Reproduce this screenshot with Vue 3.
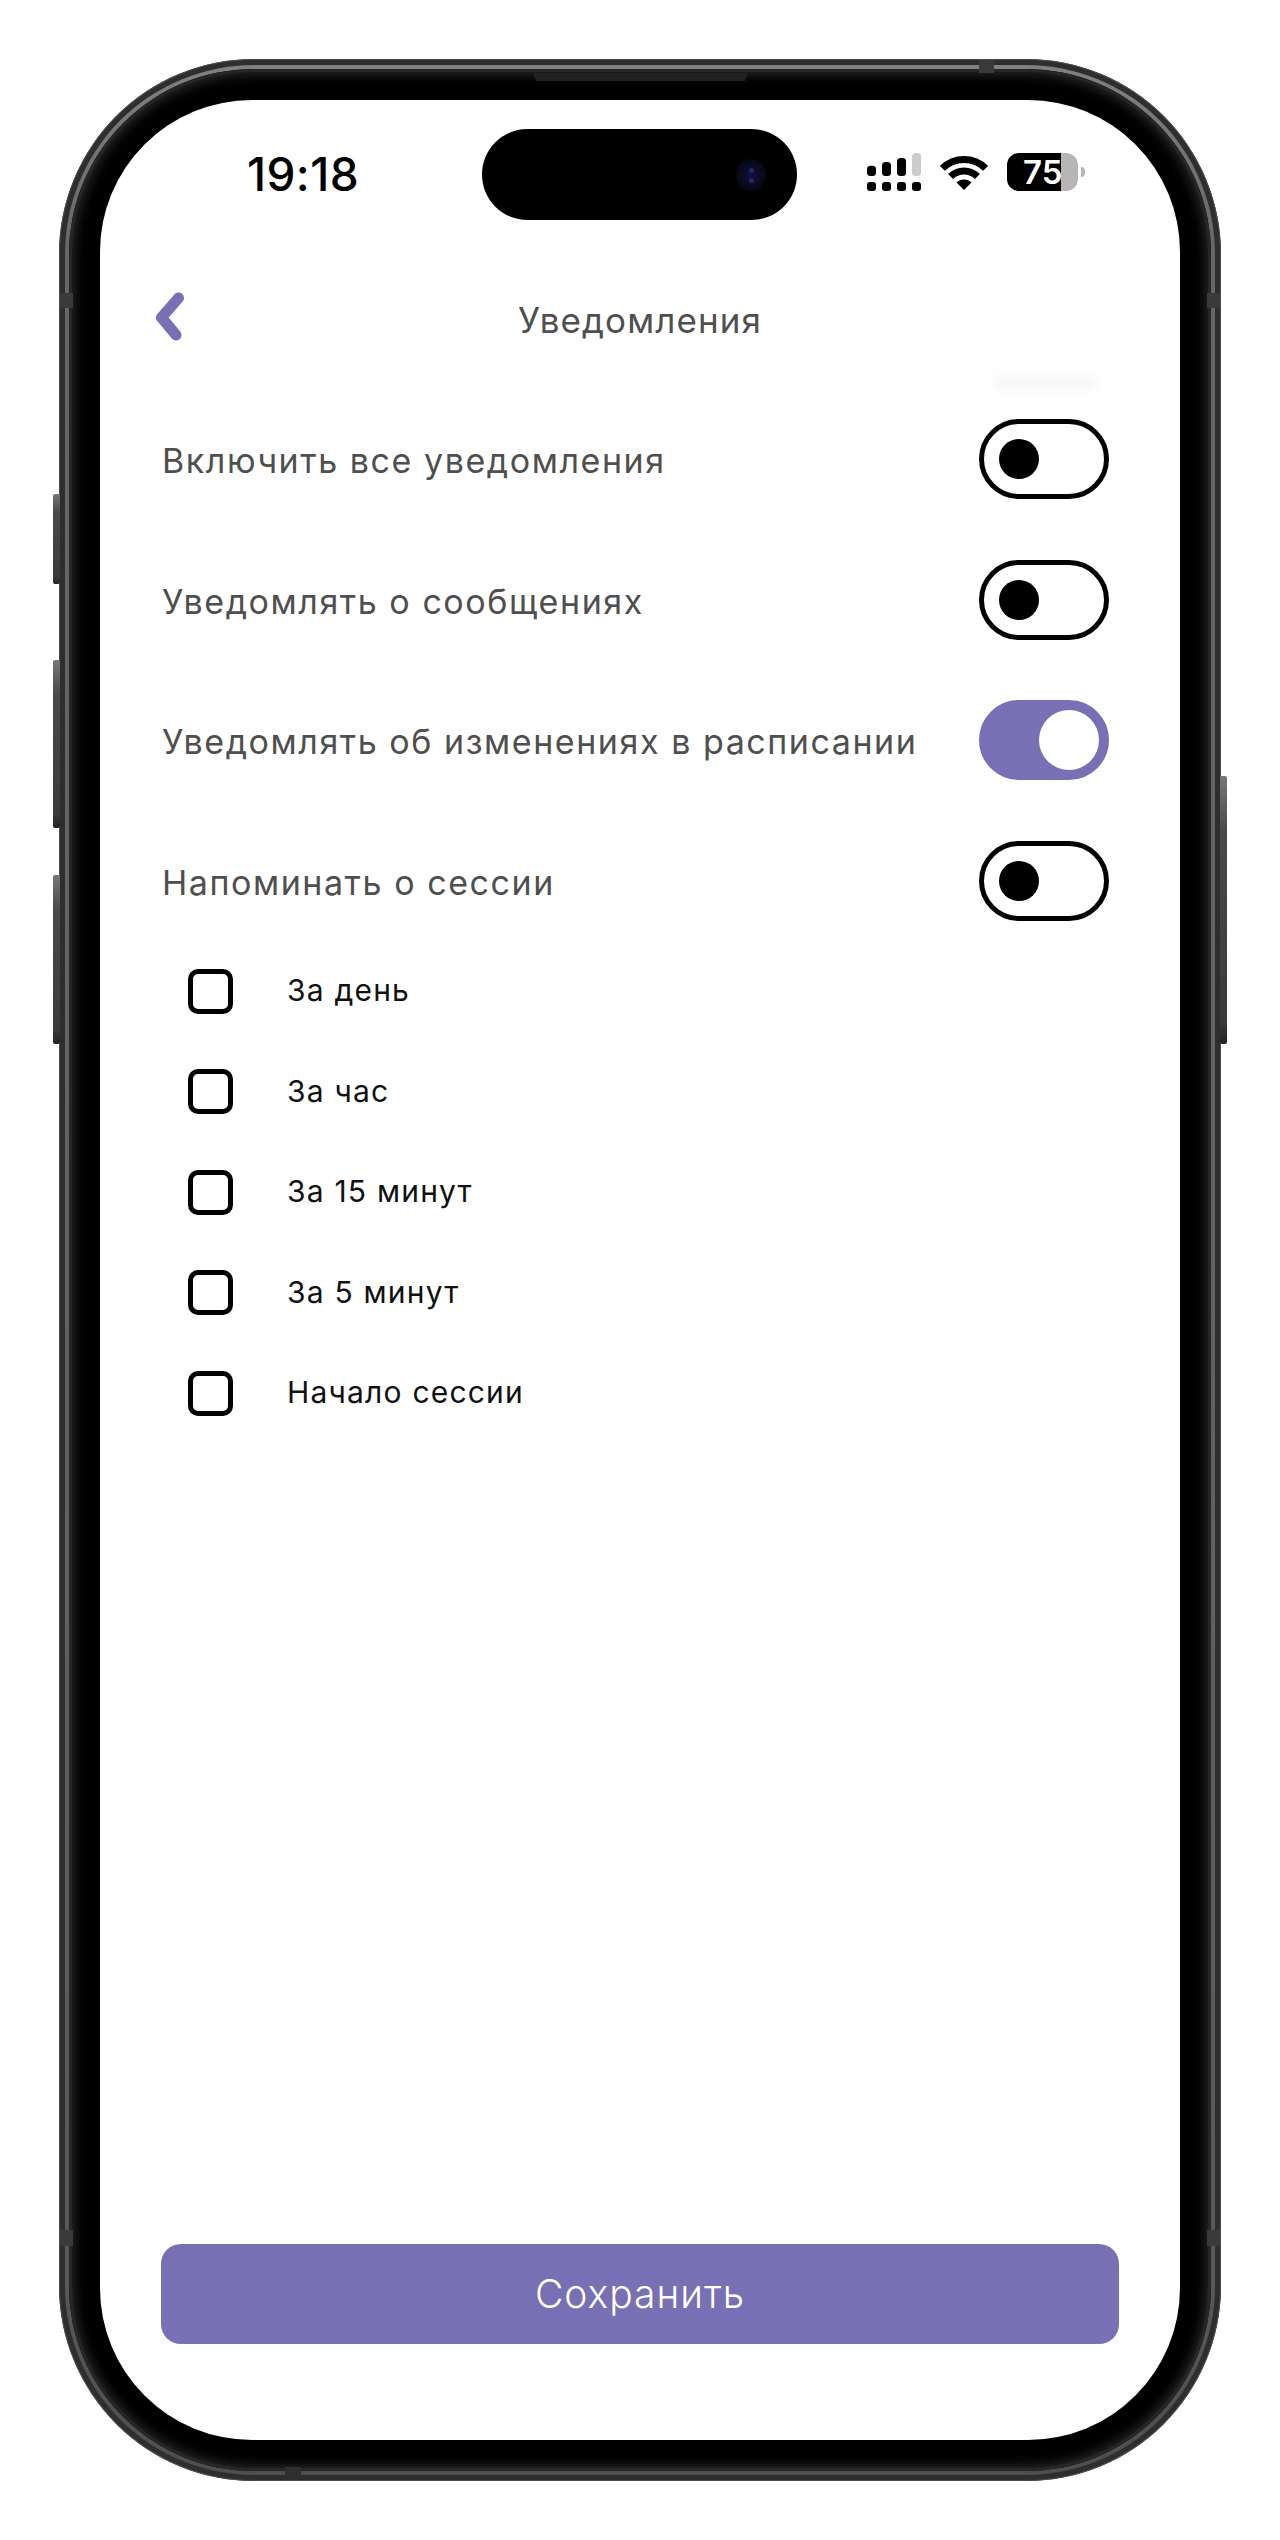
<script setup>
const rows = [
  { label: 'Включить все уведомления', on: false },
  { label: 'Уведомлять о сообщениях', on: false },
  { label: 'Уведомлять об изменениях в расписании', on: true },
  { label: 'Напоминать о сессии', on: false },
]
const options = ['За день', 'За час', 'За 15 минут', 'За 5 минут', 'Начало сессии']
const bars = [
  { x: 0, y: 12.7, h: 10.3, fill: '#000' },
  { x: 15, y: 9, h: 14, fill: '#000' },
  { x: 30, y: 5, h: 18, fill: '#000' },
  { x: 45, y: 0, h: 23, fill: '#ccc' },
]
</script>

<template>
  <div class="page">
    <div class="phone">
      <span class="btn btn-l1"></span>
      <span class="btn btn-l2"></span>
      <span class="btn btn-l3"></span>
      <span class="btn btn-r"></span>
      <span class="band band-lt"></span>
      <span class="band band-lb"></span>
      <span class="band band-rt"></span>
      <span class="band band-rb"></span>
      <span class="band band-top"></span>
      <span class="band band-bot"></span>
      <span class="speaker"></span>

      <div class="screen">
        <span class="smudge"></span>
        <div class="status">
          <div class="time-wrap"><span class="time">19:18</span></div>
          <div class="island">
            <span class="lens"><i></i><i></i></span>
          </div>
          <div class="indicators">
            <svg class="signal" width="54" height="38" viewBox="0 0 54 38">
              <rect v-for="b in bars" :key="b.x" :x="b.x" :y="b.y" width="9" :height="b.h" rx="3.5" :fill="b.fill" />
              <rect v-for="b in bars" :key="'d' + b.x" :x="b.x" y="29" width="9" height="9" rx="3" fill="#000" />
            </svg>
            <svg class="wifi" width="48" height="35" viewBox="0 0 48 35">
              <path d="M2.4 13.4A30.5 30.5 0 0 1 45.6 13.4" fill="none" stroke="#000" stroke-width="7" />
              <path d="M10.6 21.6A19 19 0 0 1 37.4 21.6" fill="none" stroke="#000" stroke-width="7" />
              <path d="M24 35L16.5 27.5A10.6 10.6 0 0 1 31.5 27.5Z" fill="#000" />
            </svg>
            <div class="battery">
              <span class="battery-body">75</span>
              <span class="battery-nub"></span>
            </div>
          </div>
        </div>

        <header class="header">
          <svg class="back" width="32" height="52" viewBox="0 0 32 52">
            <path d="M24.5 7L7.5 26.5L22 44" fill="none" stroke="#7870b5" stroke-width="11" stroke-linecap="round" stroke-linejoin="round" />
          </svg>
          <h1 class="title">Уведомления</h1>
        </header>

        <div class="rows">
          <div v-for="r in rows" :key="r.label" class="row">
            <span class="row-label">{{ r.label }}</span>
            <span class="toggle" :class="{ on: r.on }"><span class="knob"></span></span>
          </div>
        </div>

        <div class="options">
          <div v-for="o in options" :key="o" class="option">
            <span class="check"></span>
            <span class="option-label">{{ o }}</span>
          </div>
        </div>

        <button class="save">Сохранить</button>
      </div>
    </div>
  </div>
</template>

<style>
html, body { margin: 0; background: #fff; }
</style>

<style scoped>
.page {
  width: 1280px;
  height: 2540px;
  box-sizing: border-box;
  padding-top: 59px;
  display: flex;
  justify-content: center;
  background: #fff;
  font-family: Inter, "Noto Sans", sans-serif;
  overflow: hidden;
}
.phone {
  position: relative;
  width: 1162px;
  height: 2422px;
  box-sizing: border-box;
  padding: 41px;
  border-radius: 195px;
  background: #2e2e2e;
  box-shadow: inset 0 0 0 1px #4c4c4c;
}
.phone::before {
  content: "";
  position: absolute;
  inset: 6px;
  border-radius: 189px;
  background: linear-gradient(180deg, #808080 0%, #666 8%, #626262 50%, #585858 92%, #4e4e4e 100%);
}
.phone::after {
  content: "";
  position: absolute;
  inset: 10px;
  border-radius: 185px;
  background: #000;
  box-shadow: inset 0 0 0 3px #262626, inset 0 0 11px 6px #262626;
}
.btn {
  position: absolute;
  width: 7px;
  background: linear-gradient(180deg, #777 0%, #4a4a4a 20%, #3a3a3a 92%, #222 100%);
  border-radius: 2px;
}
.btn-l1 { left: -6px; top: 435px; height: 90px; }
.btn-l2 { left: -6px; top: 601px; height: 168px; }
.btn-l3 { left: -6px; top: 816px; height: 169px; }
.btn-r { right: -6px; top: 717px; height: 268px; }
.band { position: absolute; z-index: 1; background: #3a3a3a; }
.band-lt { left: 1px; top: 234px; width: 13px; height: 15px; }
.band-lb { left: 1px; top: 2171px; width: 13px; height: 16px; }
.band-rt { right: 1px; top: 234px; width: 13px; height: 15px; }
.band-rb { right: 1px; top: 2171px; width: 13px; height: 16px; }
.band-top { top: 1px; left: 920px; width: 15px; height: 13px; }
.band-bot { bottom: 1px; left: 226px; width: 16px; height: 13px; background: #2e2e2e; }
.speaker {
  position: absolute;
  z-index: 1;
  top: 14px;
  left: 474px;
  width: 215px;
  height: 8px;
  background: #222;
  clip-path: polygon(0 0, 100% 0, 98.5% 100%, 1.5% 100%);
}
.screen {
  position: relative;
  z-index: 1;
  height: 100%;
  display: flex;
  flex-direction: column;
  background: #fff;
  border-radius: 152px;
  overflow: hidden;
}
.smudge {
  position: absolute;
  left: 895px;
  top: 277px;
  width: 100px;
  height: 12px;
  background: #f4f4f4;
  filter: blur(6px);
}
.status {
  display: flex;
  align-items: center;
  height: 91px;
  margin-top: 29px;
}
.time-wrap {
  width: 382px;
  padding-left: 147px;
  padding-bottom: 2px;
  box-sizing: border-box;
}
.time {
  font-size: 46px;
  line-height: 1;
  font-weight: 550;
  color: #000;
  letter-spacing: 0.4px;
}
.island {
  position: relative;
  width: 315px;
  height: 91px;
  border-radius: 46px;
  background: #000;
}
.lens {
  position: absolute;
  left: 254px;
  top: 30px;
  width: 30px;
  height: 32px;
  border-radius: 50%;
  background: radial-gradient(circle, #10103a 0%, #090918 60%, #000 100%);
  display: flex;
  flex-direction: column;
  align-items: center;
  justify-content: center;
  gap: 5px;
}
.lens i {
  width: 5px;
  height: 5px;
  border-radius: 50%;
  background: #23267a;
}
.indicators {
  flex: 1;
  display: flex;
  align-items: center;
  gap: 19px;
  padding-left: 70px;
  padding-bottom: 5px;
}
.signal, .wifi { display: block; flex: none; }
.battery {
  display: flex;
  align-items: center;
  gap: 3px;
}
.battery-body {
  box-sizing: border-box;
  width: 71px;
  height: 38px;
  padding-left: 16px;
  border-radius: 12px;
  background: linear-gradient(90deg, #000 76%, #b6b6b6 76%);
  color: #fff;
  font-size: 33px;
  font-weight: 600;
  line-height: 38px;
}
.battery-nub {
  width: 4px;
  height: 10px;
  border-radius: 0 4px 4px 0;
  background: #b6b6b6;
}
.header {
  display: grid;
  grid-template-columns: 1fr auto 1fr;
  align-items: center;
  height: 80px;
  margin-top: 60px;
  padding-left: 54px;
  padding-right: 54px;
}
.back { display: block; margin-top: -6px; }
.title {
  margin: 0;
  font-size: 35px;
  font-weight: 400;
  color: #4f4f4f;
  letter-spacing: 1.1px;
  line-height: 80px;
}
.rows {
  display: flex;
  flex-direction: column;
  gap: 60.6px;
  margin-top: 59px;
  padding: 0 71px 0 62px;
}
.row {
  display: flex;
  align-items: center;
  justify-content: space-between;
  height: 80px;
}
.row-label {
  font-size: 34px;
  color: #4f4f4f;
  letter-spacing: 1.55px;
  margin-top: 3px;
}
.toggle {
  box-sizing: border-box;
  width: 130px;
  height: 80px;
  padding: 0 15px;
  display: flex;
  align-items: center;
  border: 5px solid #000;
  border-radius: 40px;
  background: #fff;
}
.knob {
  width: 40px;
  height: 40px;
  border-radius: 50%;
  background: #000;
}
.toggle.on {
  justify-content: flex-end;
  padding: 0 5px;
  border-color: #7870b5;
  background: #7870b5;
}
.toggle.on .knob {
  width: 60px;
  height: 60px;
  background: #fff;
}
.options {
  display: flex;
  flex-direction: column;
  gap: 55.5px;
  margin-top: 48px;
  padding-left: 88px;
}
.option {
  display: flex;
  align-items: center;
  gap: 54px;
}
.check {
  box-sizing: border-box;
  width: 45px;
  height: 45px;
  border: 5px solid #000;
  border-radius: 10px;
}
.option-label {
  font-size: 30px;
  color: #111;
  letter-spacing: 1.2px;
  margin-top: -2px;
}
.save {
  display: block;
  height: 100px;
  margin: auto 61px 96px;
  padding: 0 0 2px;
  border: 0;
  border-radius: 20px;
  background: #7870b5;
  color: #fff;
  font-family: inherit;
  font-size: 39px;
  font-weight: 300;
  letter-spacing: 1px;
}
</style>
